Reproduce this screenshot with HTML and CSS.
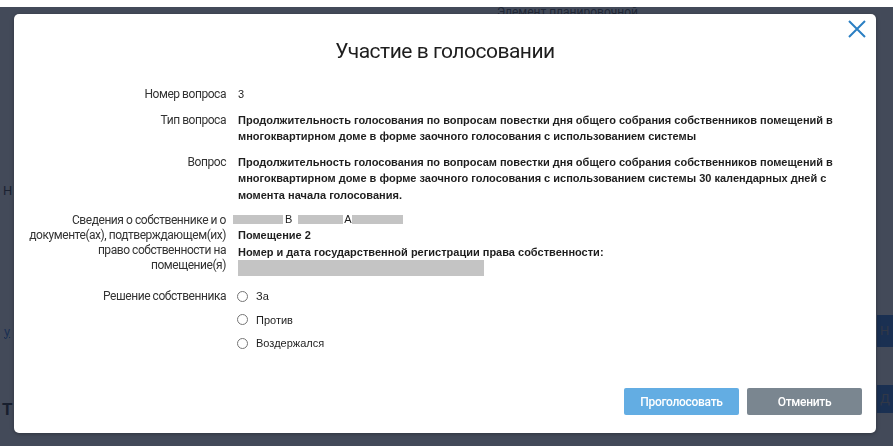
FILE: index.html
```html
<!DOCTYPE html>
<html lang="ru">
<head>
<meta charset="utf-8">
<title>Участие в голосовании</title>
<link rel="stylesheet" href="styles.css">
</head>
<body>
<div class="page">
  <div class="bg-title">Элемент планировочной</div>
  <div class="bg-letter bg-letter-n">Н</div>
  <div class="bg-row bg-row-1"><span class="bg-link">у</span><span class="bg-btn">Н</span></div>
  <div class="bg-row bg-row-2"><span class="bg-letter-t">Т</span><span class="bg-btn bg-btn-2">Д</span></div>
</div>
<div class="overlay">
  <div class="modal">
    <button class="close" aria-label="Закрыть">
      <svg width="18" height="18" viewBox="0 0 18 18"><path d="M1 1 L17 17 M17 1 L1 17" stroke="#2b7fc3" stroke-width="2" fill="none"/></svg>
    </button>
    <h1 class="title">Участие в голосовании</h1>
    <div class="form">
      <div class="label">Номер вопроса</div>
      <div class="value plain">3</div>

      <div class="label">Тип вопроса</div>
      <div class="value">Продолжительность голосования по вопросам повестки дня общего собрания собственников помещений в многоквартирном доме в форме заочного голосования с использованием системы</div>

      <div class="label">Вопрос</div>
      <div class="value">Продолжительность голосования по вопросам повестки дня общего собрания собственников помещений в многоквартирном доме в форме заочного голосования с использованием системы 30 календарных дней с момента начала голосования.</div>

      <div class="label">Сведения о собственнике и о<br>документе(ах), подтверждающем(их)<br>право собственности на<br>помещение(я)</div>
      <div class="value">
        <div class="owner"><span class="redact r1"></span><span class="letter l1">В</span><span class="redact r2"></span><span class="letter l2">А</span><span class="redact r3"></span></div>
        <div>Помещение 2</div>
        <div>Номер и дата государственной регистрации права собственности:</div>
        <div class="redact-block"></div>
      </div>

      <div class="label">Решение собственника</div>
      <div class="value plain options">
        <label class="option"><span class="radio"></span>За</label>
        <label class="option"><span class="radio"></span>Против</label>
        <label class="option"><span class="radio"></span>Воздержался</label>
      </div>
    </div>
    <div class="footer">
      <button class="btn btn-primary">Проголосовать</button>
      <button class="btn btn-secondary">Отменить</button>
    </div>
  </div>
</div>
</body>
</html>
```
FILE: styles.css
```css
* { box-sizing: border-box; }
html, body { margin: 0; padding: 0; }
body {
  width: 893px;
  height: 446px;
  overflow: hidden;
  background: #ffffff;
  font-family: Roboto, "Liberation Sans", sans-serif;
  color: #222;
}
.page {
  display: flex;
  flex-direction: column;
  height: 446px;
}
.bg-title {
  margin: 5px 0 0 497px;
  font-size: 12px;
  color: #444;
  line-height: 14px;
}
.bg-letter {
  font-size: 13px;
  color: #222;
  margin-left: 3px;
}
.bg-letter-n { margin-top: 164px; line-height: 16px; }
.bg-row {
  display: flex;
  justify-content: space-between;
  align-items: center;
}
.bg-row-1 { margin-top: 116px; }
.bg-row-2 { margin-top: 32px; }
.bg-link {
  margin-left: 4px;
  color: #1f6fd8;
  font-size: 13px;
  text-decoration: underline;
}
.bg-letter-t {
  margin-left: 2px;
  margin-top: 20px;
  font-size: 17px;
  font-weight: bold;
  color: #111;
}
.bg-btn {
  width: 16px;
  height: 32px;
  background: #1f6fd8;
  color: #999;
  font-size: 13px;
  line-height: 32px;
  padding-left: 3px;
  overflow: hidden;
}
.bg-btn-2 { height: 28px; line-height: 28px; }

.overlay {
  position: fixed;
  top: 7px;
  left: 0;
  right: 0;
  bottom: 0;
  background: rgba(26, 34, 52, 0.82);
  display: flex;
  padding: 7px 17px 13px 14px;
}
.modal {
  position: relative;
  flex: 1;
  background: #fff;
  border-radius: 5px;
  display: flex;
  flex-direction: column;
  box-shadow: 0 1px 4px rgba(0,0,0,0.3);
}
.close {
  position: absolute;
  top: 6px;
  right: 10px;
  width: 18px;
  height: 18px;
  padding: 0;
  border: 0;
  background: transparent;
  display: flex;
}
.title {
  margin: 24px 0 0;
  text-align: center;
  font-size: 21px;
  font-weight: 400;
  line-height: 26px;
  letter-spacing: -0.5px;
  color: #1e1e1e;
}
.form {
  margin-top: 22px;
  display: grid;
  grid-template-columns: 212px 600px;
  column-gap: 12px;
  row-gap: 9px;
}
.label {
  text-align: right;
  font-size: 12px;
  line-height: 15px;
  padding-top: 1px;
  color: #333;
  letter-spacing: -0.45px;
  white-space: nowrap;
}
.value {
  font-family: "Liberation Sans", Arial, sans-serif;
  font-size: 11px;
  font-weight: bold;
  line-height: 16.5px;
  color: #1e1e1e;
}
.value.plain { font-weight: normal; }
.owner {
  display: flex;
  align-items: center;
  height: 15px;
  margin-left: -5px;
  font-weight: normal;
}
.redact {
  display: inline-block;
  height: 9px;
  background: #c4c4c4;
}
.r1 { width: 50px; }
.r2 { width: 45px; }
.r3 { width: 51px; }
.l1 { padding: 0 6px 0 2px; }
.l2 { padding: 0 0 0 1px; }
.redact-block {
  margin-bottom: 3px;
  width: 246px;
  height: 16px;
  background: #c4c4c4;
}
.options {
  display: flex;
  flex-direction: column;
  gap: 7px;
}
.option {
  display: flex;
  align-items: center;
  gap: 8px;
  margin-left: -1px;
}
.radio {
  width: 11px;
  height: 11px;
  border: 1px solid #767676;
  border-radius: 50%;
  background: #fff;
}
.footer {
  margin-top: auto;
  display: flex;
  justify-content: flex-end;
  gap: 8px;
  padding: 0 14px 18px 0;
}
.btn {
  width: 115px;
  height: 27px;
  border: 0;
  border-radius: 2px;
  color: #fff;
  font-family: Roboto, "Liberation Sans", sans-serif;
  font-size: 12px;
  font-weight: 500;
  letter-spacing: -0.3px;
}
.btn-primary { background: #63ade3; }
.btn-secondary { background: #7a8690; }
```
